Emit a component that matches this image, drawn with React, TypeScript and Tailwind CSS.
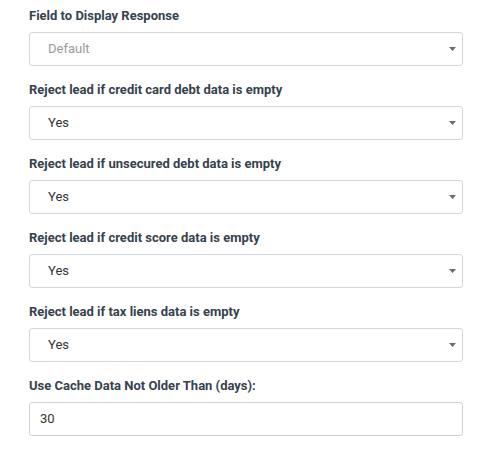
import React from 'react';

const Caret = () => (
  <svg width="7" height="4" viewBox="0 0 7 4" className="absolute right-[6px] top-1/2 -translate-y-1/2">
    <path d="M0 0 L7 0 L3.5 4 Z" fill="#6b6b6b" />
  </svg>
);

interface SelectProps {
  label: string;
  value: string;
  disabled?: boolean;
}

const SelectField: React.FC<SelectProps> = ({ label, value, disabled }) => (
  <div className="mb-[15px]">
    <label className="block text-[13px] leading-[17px] font-bold text-[#36424e] mb-[8px]">{label}</label>
    <div className="relative h-[34px] rounded-[3px] border border-[#d3d6dc] bg-white flex items-center pl-[18px]">
      <span className={`text-[13px] ${disabled ? 'text-[#9a9a9a]' : 'text-[#333333]'}`}>{value}</span>
      <Caret />
    </div>
  </div>
);

export default function App() {
  return (
    <div className="w-[492px] h-[458px] bg-white pl-[29px] pr-[29px] pt-[7px]" style={{ fontFamily: 'Roboto, "Liberation Sans", sans-serif' }}>
      <SelectField label="Field to Display Response" value="Default" disabled />
      <SelectField label="Reject lead if credit card debt data is empty" value="Yes" />
      <SelectField label="Reject lead if unsecured debt data is empty" value="Yes" />
      <SelectField label="Reject lead if credit score data is empty" value="Yes" />
      <SelectField label="Reject lead if tax liens data is empty" value="Yes" />
      <div>
        <label className="block text-[13px] leading-[17px] font-bold text-[#36424e] mb-[8px]">Use Cache Data Not Older Than (days):</label>
        <div className="h-[34px] rounded-[3px] border border-[#ccd1d9] bg-white flex items-center pl-[10px]">
          <span className="text-[13px] text-[#333333]">30</span>
        </div>
      </div>
    </div>
  );
}
